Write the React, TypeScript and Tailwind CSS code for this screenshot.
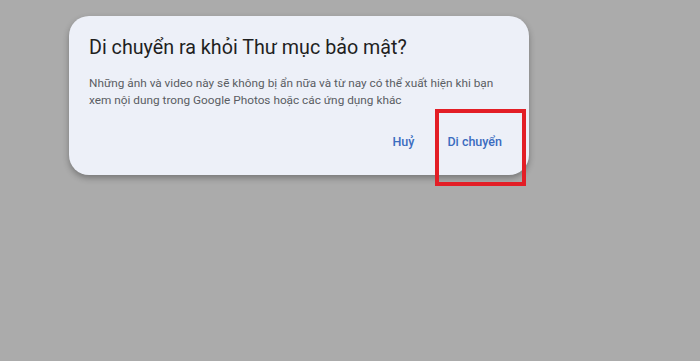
import React from "react";

export default function App() {
  return (
    <div className="relative w-[700px] h-[361px] bg-[#ababab] overflow-hidden" style={{ fontFamily: "Roboto, 'Noto Sans', sans-serif" }}>
      <div className="pt-[16px] pl-[69px]">
        <div className="w-[460px] h-[159px] rounded-[20px] bg-[#edf0f8] shadow-[0_3px_6px_rgba(0,0,0,0.3)] pl-[20px] pr-[20px] pt-[19px] flex flex-col">
          <div className="text-[19.7px] leading-[26px] text-[#1f1f1f]">Di chuyển ra khỏi Thư mục bảo mật?</div>
          <div className="mt-[14px] text-[11.8px] leading-[17px] text-[#5a5d63] whitespace-nowrap">
            Những ảnh và video này sẽ không bị ẩn nữa và từ nay có thể xuất hiện khi bạn
            <br />
            xem nội dung trong Google Photos hoặc các ứng dụng khác
          </div>
          <div className="mt-[25px] flex justify-end gap-[33px] pr-[7px] text-[12.5px] leading-[16px] font-medium text-[#3b6cc0]">
            <span>Huỷ</span>
            <span>Di chuyển</span>
          </div>
        </div>
      </div>
      <div className="absolute left-[435px] top-[109px] w-[91px] h-[77px] border-[4px] border-[#e31e26]" />
    </div>
  );
}
